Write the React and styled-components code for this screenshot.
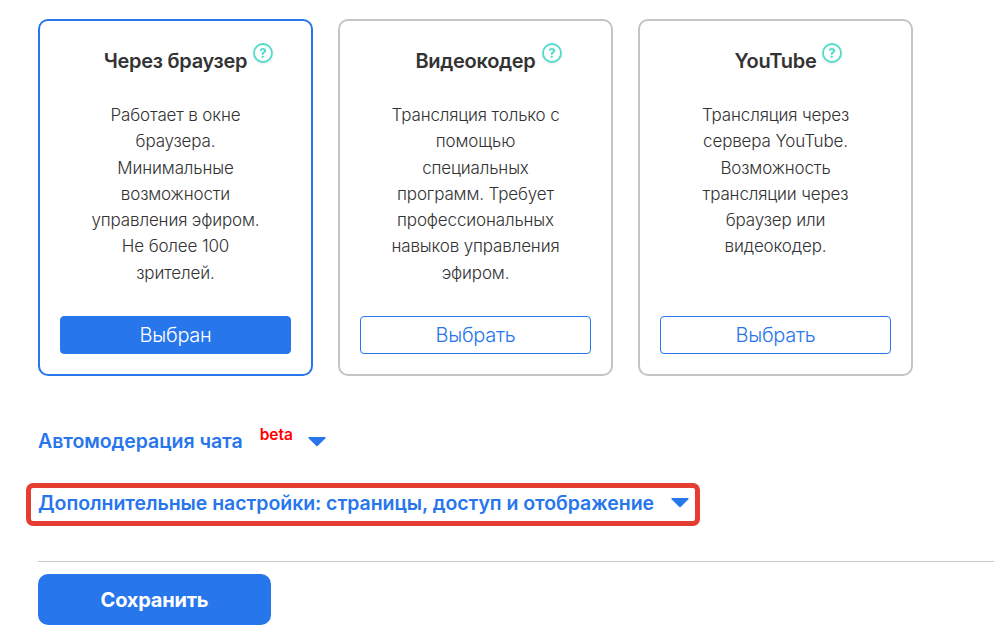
import React from "react";
import styled, { createGlobalStyle } from "styled-components";

const Global = createGlobalStyle`
  html, body { margin: 0; padding: 0; background: #fff; }
  body { font-family: Inter, "Noto Sans", sans-serif; overflow: hidden; }
`;
const Page = styled.div`
  width: 994px; height: 641px; box-sizing: border-box; padding: 19px 0 0 38px; overflow: hidden;
`;
const Cards = styled.div`display: flex; gap: 25px;`;
const Card = styled.div`
  width: 275px; height: 357px; box-sizing: border-box;
  border: 2px solid ${p => (p.$active ? "#2876ec" : "#c4c4c4")};
  border-radius: 10px; padding: 22px 20px 20px;
  display: flex; flex-direction: column; align-items: center;
`;
const TitleRow = styled.div`
  display: flex; align-items: flex-start; justify-content: center; height: 38px; padding-left: 26px;
`;
const Title = styled.h3`
  margin: 0; padding-top: 3px; font-size: 20px; line-height: 30px; font-weight: 600; color: #333;
  letter-spacing: -0.3px;
`;
const Help = styled.svg`width: 20px; height: 20px; margin-left: 6px; flex: none; filter: drop-shadow(0 1px 1px rgba(0,0,0,.1));`;
const Desc = styled.p`
  margin: 21px 0 0; font-size: 17px; line-height: 26.25px; font-weight: 300; color: #333;
  text-align: center; letter-spacing: -0.15px;
`;
const Choose = styled.button`
  width: 231px; height: 38px; box-sizing: border-box; margin-top: auto; border-radius: 4px; flex: none;
  border: 1px solid #2876ec; font: 300 20px/1 Inter, sans-serif; letter-spacing: -0.3px;
  background: ${p => (p.$active ? "#2876ec" : "#fff")};
  color: ${p => (p.$active ? "#fff" : "#2876ec")};
`;
const Toggle = styled.div`
  display: inline-flex; align-items: center; font-size: 19.5px; line-height: 28px; font-weight: 600; color: #2876ec;
  letter-spacing: -0.05px;
`;
const ChatRow = styled.div`margin-top: 51px; height: 28px; display: flex;`;
const Beta = styled.span`
  font: 600 15.5px/16px Inter, sans-serif; color: #f00; margin: 0 0 0 17px; align-self: flex-start;
`;
const Caret = styled.svg`width: 18px; height: 11px; flex: none; margin-left: ${p => p.$gap}px;`;
const Highlight = styled.div`
  margin: 28px 0 0 -12px; width: 674px; height: 43px; box-sizing: border-box;
  border: 5px solid #e53d31; border-radius: 7px; padding: 0 0 4px 7px; display: flex; align-items: center;
`;
const Divider = styled.hr`margin: 35px 0 0; border: 0; border-top: 1px solid #c8c8c8;`;
const Save = styled.button`
  display: block; margin-top: 12px; width: 233px; height: 51px; border: 0; border-radius: 10px;
  background: #2876ec; color: #fff; font: 700 20px/1 Inter, sans-serif; letter-spacing: -0.2px;
`;

const HelpIcon = () => (
  <Help viewBox="0 0 20 20">
    <circle cx="10" cy="10" r="9" fill="#fff" stroke="#4fdccb" strokeWidth="1.8" />
    <text x="10" y="14.6" textAnchor="middle" fontFamily="Inter, sans-serif" fontWeight="800" fontSize="13" fill="#4fdccb">?</text>
  </Help>
);
const CaretIcon = ({ gap }) => (
  <Caret $gap={gap} viewBox="0 0 18 11"><path d="M1 1h16a.7.7 0 0 1 .5 1.2L9.6 10a.8.8 0 0 1-1.2 0L.5 2.2A.7.7 0 0 1 1 1z" fill="#2876ec" /></Caret>
);

const data = [
  { t: "Через браузер", a: true, b: "Выбран", d: ["Работает в окне", "браузера.", "Минимальные", "возможности", "управления эфиром.", "Не более 100", "зрителей."] },
  { t: "Видеокодер", b: "Выбрать", d: ["Трансляция только с", "помощью", "специальных", "программ. Требует", "профессиональных", "навыков управления", "эфиром."] },
  { t: "YouTube", b: "Выбрать", d: ["Трансляция через", "сервера YouTube.", "Возможность", "трансляции через", "браузер или", "видеокодер."] },
];

export default function App() {
  return (
    <Page>
      <Global />
      <Cards>
        {data.map(c => (
          <Card key={c.t} $active={c.a}>
            <TitleRow><Title>{c.t}</Title><HelpIcon /></TitleRow>
            <Desc>{c.d.map((l, i) => <React.Fragment key={i}>{l}<br /></React.Fragment>)}</Desc>
            <Choose $active={c.a}>{c.b}</Choose>
          </Card>
        ))}
      </Cards>
      <ChatRow>
        <Toggle>Автомодерация чата</Toggle>
        <Beta>beta</Beta>
        <Toggle><CaretIcon gap={15} /></Toggle>
      </ChatRow>
      <Highlight>
        <Toggle>Дополнительные настройки: страницы, доступ и отображение<CaretIcon gap={17} /></Toggle>
      </Highlight>
      <Divider />
      <Save>Сохранить</Save>
    </Page>
  );
}
